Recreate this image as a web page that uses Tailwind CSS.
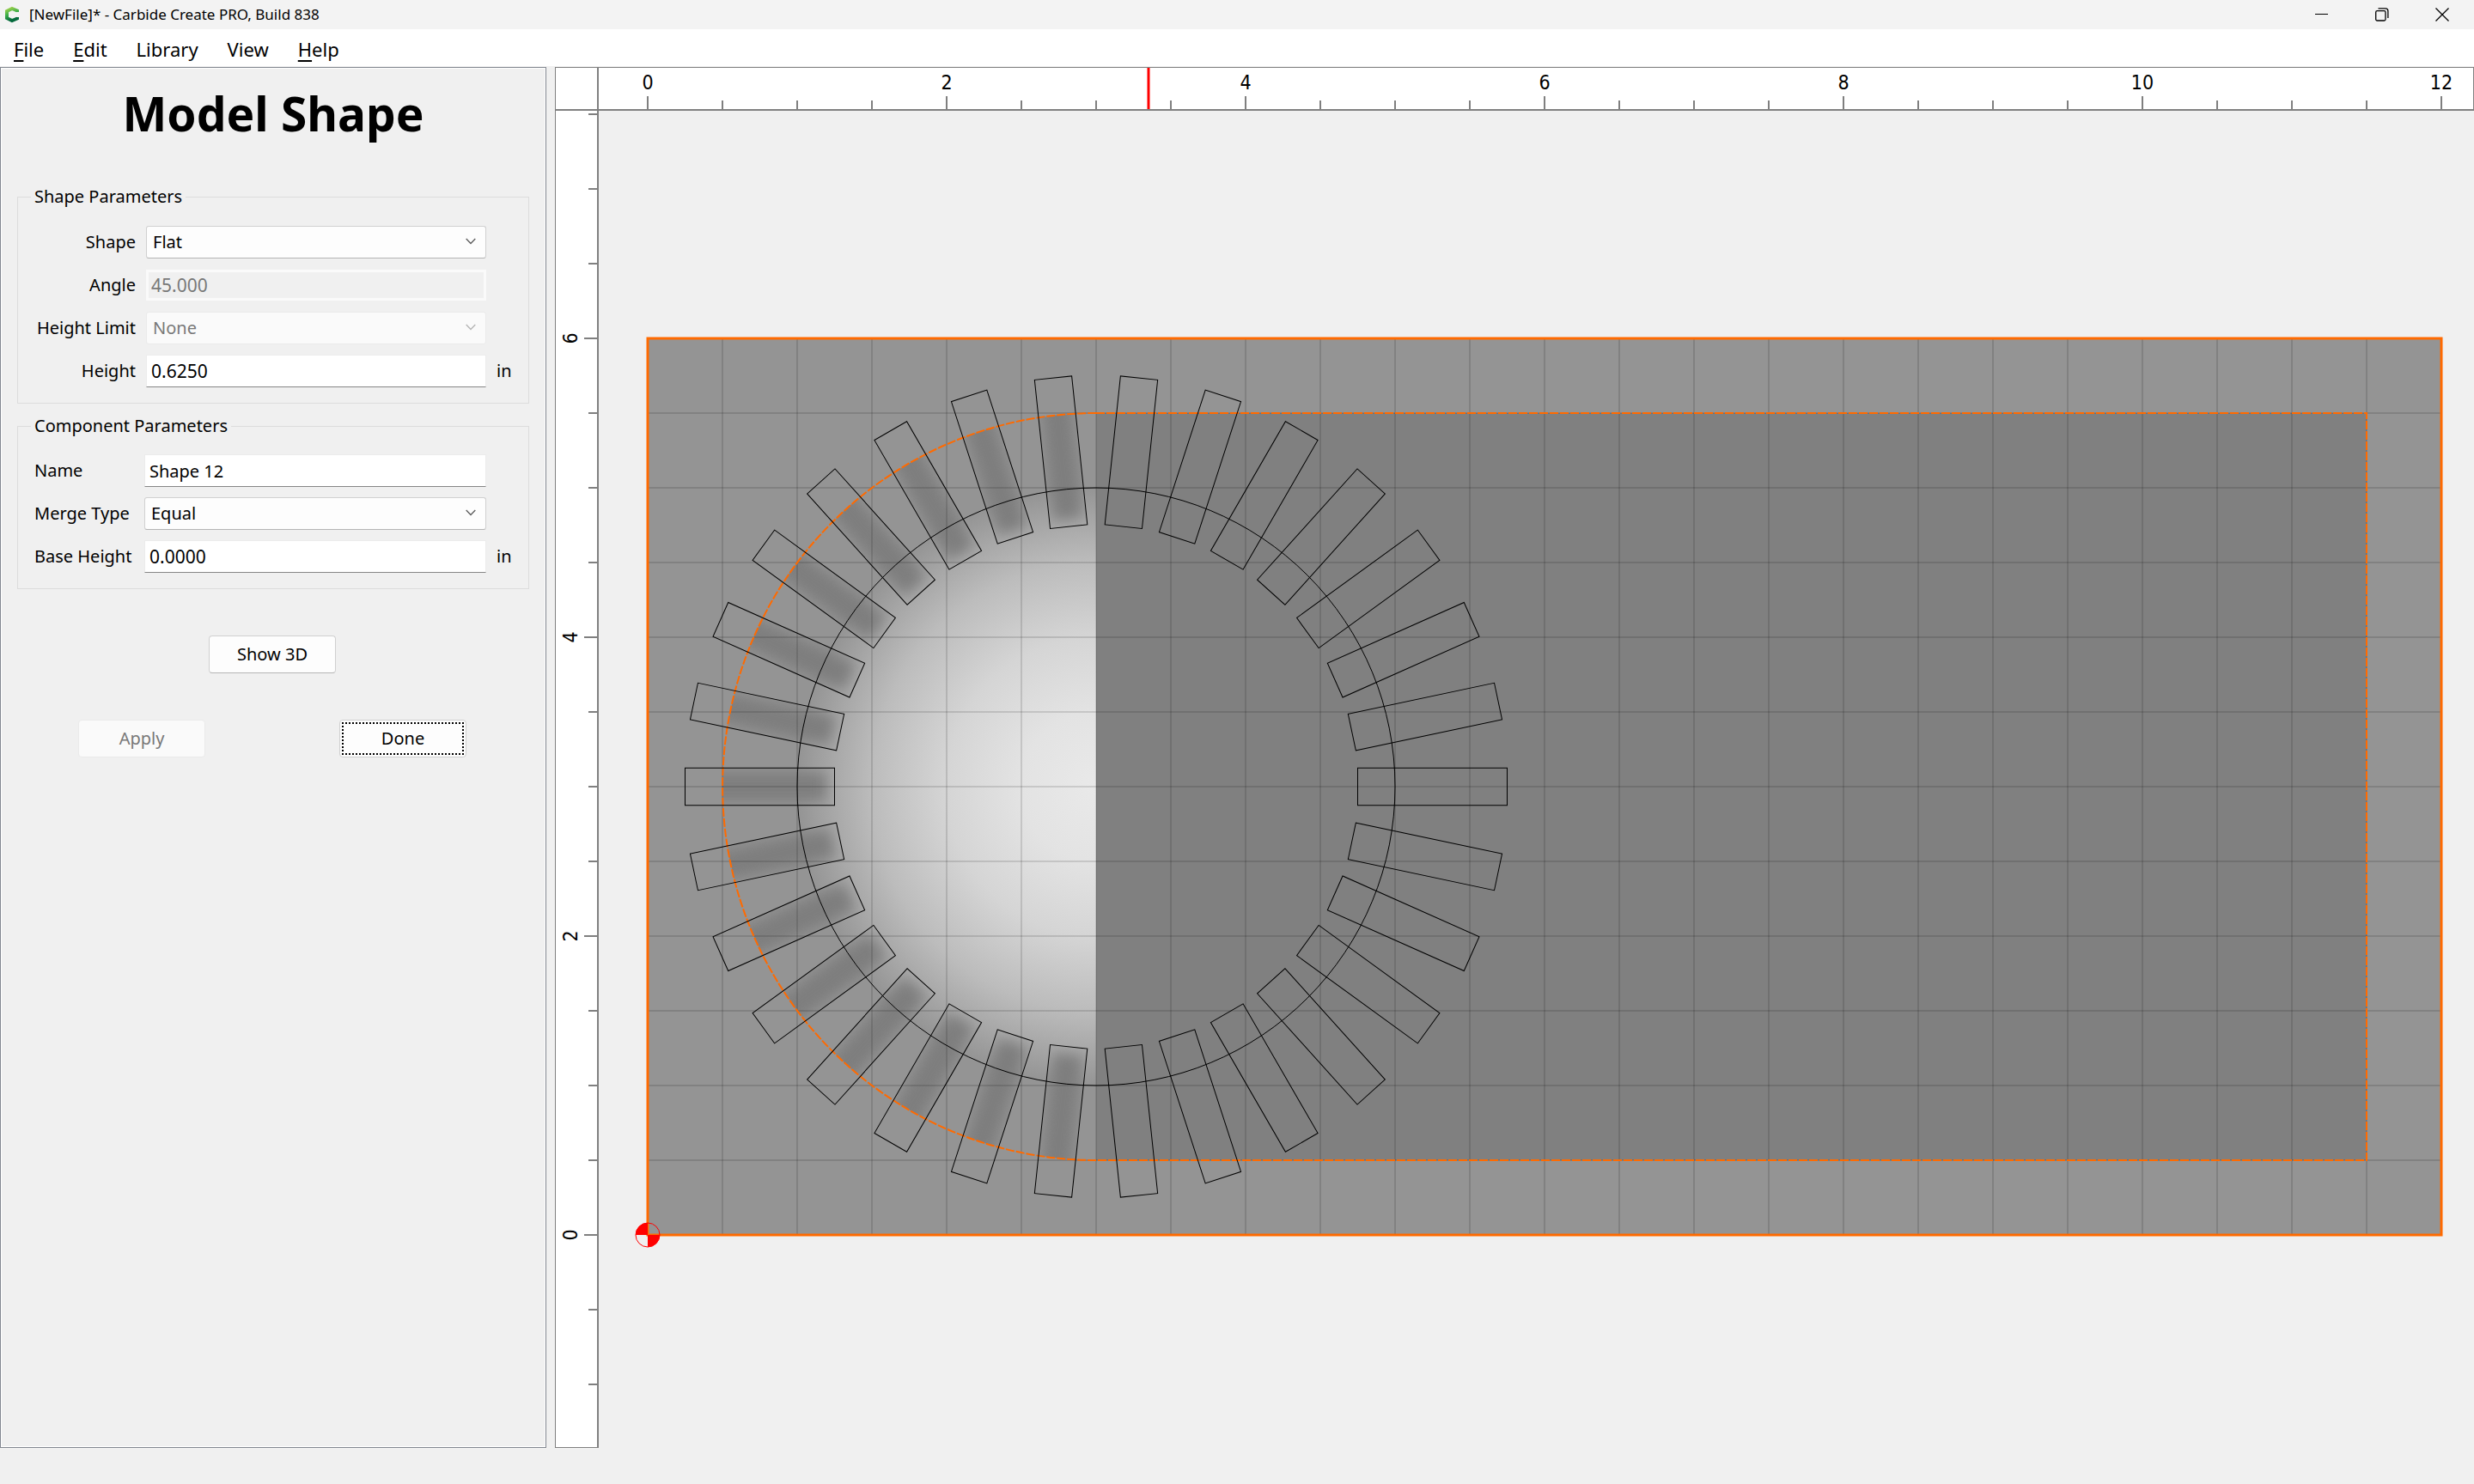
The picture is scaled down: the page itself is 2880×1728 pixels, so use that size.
<!DOCTYPE html>
<html lang="en">

<head>
  <meta charset="UTF-8">
  <meta name="viewport" content="width=device-width, initial-scale=1.0">
  <title>[NewFile]* - Carbide Create PRO, Build 838</title>
  <script src="https://cdn.jsdelivr.net/npm/@tailwindcss/browser@4"></script>
</head>

<body class="h-screen flex flex-col overflow-hidden bg-[#f0f0f0] text-black text-[20px] leading-7 font-['Noto_Sans','Open_Sans',sans-serif]">
  <!-- title bar -->
  <header class="h-[34px] shrink-0 flex items-center bg-[#f3f3f3] pl-1 pr-[2px]">
    <svg class="w-5 h-5" viewBox="0 0 20 20" fill="none">
      <defs>
        <linearGradient id="logo" x1="0" y1="0" x2="0.3" y2="1">
          <stop offset="0" stop-color="#9bd04a" />
          <stop offset="0.5" stop-color="#3dae49" />
          <stop offset="1" stop-color="#04693c" />
        </linearGradient>
      </defs>
      <path d="M16 7 V5.5 L10 3 L4 6 V14 L10 17 L16 14.5 V13" stroke="url(#logo)" stroke-width="4" />
    </svg>
    <h1 class="ml-[10px] text-[17px] font-normal">[NewFile]* - Carbide Create PRO, Build 838</h1>
    <div class="ml-auto flex h-full">
      <button class="w-[70px] h-full flex items-center justify-center" aria-label="Minimize">
        <svg class="w-4 h-4" viewBox="0 0 16 16" stroke="#000"><path d="M0 7.5 H15" /></svg>
      </button>
      <button class="w-[70px] h-full flex items-center justify-center" aria-label="Restore">
        <svg class="w-4 h-4" viewBox="0 0 16 16" fill="none" stroke="#000" stroke-width="1.3">
          <rect x="0.7" y="3.7" width="11.3" height="11.3" rx="1.5" />
          <path d="M3.5 0.9 H12 Q14.9 0.9 14.9 4 V12" />
        </svg>
      </button>
      <button class="w-[70px] h-full flex items-center justify-center" aria-label="Close">
        <svg class="w-4 h-4" viewBox="0 0 16 16" stroke="#000" stroke-width="1.3"><path d="M0.5 0.5 L15.5 15.5 M15.5 0.5 L0.5 15.5" /></svg>
      </button>
    </div>
  </header>

  <nav class="h-[43px] shrink-0 flex items-center gap-[34px] bg-white pl-4 pt-[2px] text-[22px]">
    <button><span class="underline underline-offset-4">F</span>ile</button>
    <button><span class="underline underline-offset-4">E</span>dit</button>
    <button>Library</button>
    <button>View</button>
    <button><span class="underline underline-offset-4">H</span>elp</button>
  </nav>

  <main class="flex-1 min-h-0 flex gap-[10px] pt-px">
    <!-- parameters panel -->
    <section class="w-[636px] shrink-0 border border-[#828790]">
      <form class="h-full border border-white px-[18px]">
        <h2 class="mt-[22px] mb-[53px] text-center text-[55px] leading-[60px] font-bold">Model Shape</h2>

        <fieldset class="border border-[#dcdcdc] pl-[19px] pt-5 pb-[18px] flex flex-col gap-3">
          <legend class="-ml-1 px-1">Shape Parameters</legend>
          <div class="h-[38px] flex items-center gap-3">
            <label for="shape" class="w-[118px] text-right">Shape</label>
            <div class="relative w-[396px] h-full">
              <select id="shape" class="appearance-none w-full h-full rounded-[3px] border border-[#d0d0d0] border-b-[#b4b4b4] bg-[#fdfdfd] px-[7px]">
                <option>Flat</option>
              </select>
              <svg class="absolute right-3 top-[14px] w-3 h-2 pointer-events-none" viewBox="0 0 12 8" fill="none" stroke="#5c5c5c" stroke-width="1.3"><path d="M0.7 1 L6 6.5 L11.3 1" /></svg>
            </div>
          </div>
          <div class="h-[38px] flex items-center gap-3">
            <label for="angle" class="w-[118px] text-right">Angle</label>
            <input id="angle" disabled value="45.000" class="w-[396px] h-[36px] border-3 border-[#fafafa] bg-[#f0f0f0] px-[3px] text-[21px] text-[#787878]">
          </div>
          <div class="h-[38px] flex items-center gap-3">
            <label for="limit" class="w-[118px] text-right whitespace-nowrap">Height Limit</label>
            <div class="relative w-[396px] h-full">
              <select id="limit" disabled class="appearance-none w-full h-full rounded-[3px] border border-[#eaeaea] bg-[#fafafa] px-[7px] text-[#787878] opacity-100">
                <option>None</option>
              </select>
              <svg class="absolute right-3 top-[14px] w-3 h-2 pointer-events-none" viewBox="0 0 12 8" fill="none" stroke="#b4b4b4" stroke-width="1.3"><path d="M0.7 1 L6 6.5 L11.3 1" /></svg>
            </div>
          </div>
          <div class="h-[38px] flex items-center gap-3">
            <label for="height" class="w-[118px] text-right">Height</label>
            <input id="height" value="0.6250" class="w-[396px] h-[38px] border border-[#ececec] border-b-[#868686] bg-white px-[5px] text-[21px]">
            <span>in</span>
          </div>
        </fieldset>

        <fieldset class="mt-3 border border-[#dcdcdc] pl-[19px] pt-[19px] pb-[18px] flex flex-col gap-3">
          <legend class="-ml-1 px-1">Component Parameters</legend>
          <div class="h-[38px] flex items-center gap-3">
            <label for="name" class="w-[116px]">Name</label>
            <input id="name" value="Shape 12" class="w-[398px] h-[38px] border border-[#ececec] border-b-[#868686] bg-white px-[5px]">
          </div>
          <div class="h-[38px] flex items-center gap-3">
            <label for="merge" class="w-[116px]">Merge Type</label>
            <div class="relative w-[398px] h-full">
              <select id="merge" class="appearance-none w-full h-full rounded-[3px] border border-[#d0d0d0] border-b-[#b4b4b4] bg-[#fdfdfd] px-[7px]">
                <option>Equal</option>
              </select>
              <svg class="absolute right-3 top-[14px] w-3 h-2 pointer-events-none" viewBox="0 0 12 8" fill="none" stroke="#5c5c5c" stroke-width="1.3"><path d="M0.7 1 L6 6.5 L11.3 1" /></svg>
            </div>
          </div>
          <div class="h-[38px] flex items-center gap-3">
            <label for="base" class="w-[116px] whitespace-nowrap">Base Height</label>
            <input id="base" value="0.0000" class="w-[398px] h-[38px] border border-[#ececec] border-b-[#868686] bg-white px-[5px] text-[21px]">
            <span>in</span>
          </div>
        </fieldset>

        <div class="mt-[54px] flex justify-center pr-[2px]">
          <button type="button" class="w-[148px] h-[44px] rounded-[4px] border border-[#d0d0d0] border-b-[#b4b4b4] bg-[#fdfdfd]">Show 3D</button>
        </div>
        <div class="mt-[54px] flex justify-between pl-[71px] pr-[73px]">
          <button type="button" disabled class="w-[148px] h-[44px] rounded-[4px] border border-[#eaeaea] bg-[#fafafa] text-[#787878]">Apply</button>
          <button type="button" class="w-[148px] h-[44px] rounded-[4px] border border-[#d0d0d0] bg-[#fdfdfd] p-[2px]">
            <span class="flex w-full h-full items-center justify-center border-2 border-dotted border-black">Done</span>
          </button>
        </div>
      </form>
    </section>

    <!-- drawing view: rulers along the top and left, canvas in the remaining cell -->
    <section class="flex-1 min-w-0 grid grid-cols-[51px_1fr] grid-rows-[51px_1fr] font-['DejaVu_Sans_Condensed','Noto_Sans',sans-serif]">
      <div class="border-t border-l border-r-2 border-b-2 border-[#808080] bg-white"></div>
      <div class="min-w-0 border-t border-r border-b-2 border-[#808080] bg-white">
        <svg id="rulerX" class="block w-full h-12"></svg>
      </div>
      <div class="min-h-0 border-l border-r-2 border-b border-[#808080] bg-white">
        <svg id="rulerY" class="block w-12 h-full"></svg>
      </div>
      <div class="min-w-0 min-h-0">
        <svg id="canvas" class="block w-full h-full" fill="none"></svg>
      </div>
    </section>
  </main>

  <footer class="h-[42px] shrink-0"></footer>

  <script>
    // pixels per inch, and where the stock origin sits in the canvas
    const PPI = 174
    const ORIGIN = { x: 57, y: 1309 }
    const X = inch => ORIGIN.x + inch * PPI
    const Y = inch => ORIGIN.y - inch * PPI

    const range = (from, to, step) => {
      const arr = []
      for (let v = from; v <= to; v += step) arr.push(v)
      return arr
    }

    // rulers
    document.getElementById('rulerX').innerHTML = range(0, 12, 0.5).map(v => {
      const major = v % 2 == 0
      return `<line x1="${X(v)}" x2="${X(v)}" y1="${major ? 33 : 38}" y2="48" stroke="#000" />
        ${major ? `<text x="${X(v)}" y="25" text-anchor="middle" class="text-[23px]">${v}</text>` : ''}`
    }).join('') + `<line x1="640" x2="640" y1="0" y2="48" stroke="#f00" stroke-width="3" />`

    document.getElementById('rulerY').innerHTML = range(-1, 7.5, 0.5).map(v => {
      const major = v % 2 == 0
      return `<line y1="${Y(v)}" y2="${Y(v)}" x1="${major ? 33 : 38}" x2="48" stroke="#000" />
        ${major ? `<text transform="translate(25 ${Y(v)}) rotate(-90)" text-anchor="middle" class="text-[23px]">${v}</text>` : ''}`
    }).join('')

    // canvas
    const cx = X(3), cy = Y(3)
    const angles = range(0, 348, 12)
    const outline = `M${cx} ${Y(5.5)} H${X(11.5)} V${Y(0.5)} H${cx} A${2.5 * PPI} ${2.5 * PPI} 0 0 1 ${cx} ${Y(5.5)} Z`
    const grid = range(0.5, 11.5, 0.5).map(v => `M${X(v)} ${Y(6)} V${Y(0)}`).join(' ') + ' ' +
      range(0.5, 5.5, 0.5).map(v => `M${X(0)} ${Y(v)} H${X(12)}`).join(' ')
    const shades = angles.filter(a => a > 90 && a < 270).map(a =>
      `<rect x="${cx + 314}" y="${cy - 17}" width="180" height="34" transform="rotate(${a} ${cx} ${cy})" />`).join('')
    const spokes = angles.map(a =>
      `<rect x="${cx + 1.75 * PPI}" y="${cy - PPI / 8}" width="${PPI}" height="${PPI / 4}" transform="rotate(${a} ${cx} ${cy})" />`).join('')

    document.getElementById('canvas').innerHTML = `
      <defs>
        <radialGradient id="dome" gradientUnits="userSpaceOnUse" cx="${cx}" cy="${cy}" r="${2 * PPI}">
          <stop offset="0" stop-color="#e9e9e9" />
          <stop offset="0.25" stop-color="#e3e3e3" />
          <stop offset="0.5" stop-color="#d5d5d5" />
          <stop offset="0.75" stop-color="#bcbcbc" />
          <stop offset="0.88" stop-color="#a8a8a8" />
          <stop offset="1" stop-color="#949494" />
        </radialGradient>
        <filter id="soft" x="-10%" y="-10%" width="120%" height="120%"><feGaussianBlur stdDeviation="8" /></filter>
        <clipPath id="half"><path d="M${cx} ${Y(0.5)} A${2.5 * PPI} ${2.5 * PPI} 0 0 1 ${cx} ${Y(5.5)} Z" /></clipPath>
        <clipPath id="slots">${spokes}</clipPath>
      </defs>
      <rect x="${X(0)}" y="${Y(6)}" width="${12 * PPI}" height="${6 * PPI}" fill="#949494" />
      <path d="M${cx} ${Y(1)} A${2 * PPI} ${2 * PPI} 0 0 1 ${cx} ${Y(5)} Z" fill="url(#dome)" />
      <g clip-path="url(#half)"><g clip-path="url(#slots)"><g filter="url(#soft)" fill="#7e7e7e">${shades}</g></g></g>
      <rect x="${cx}" y="${Y(5.5)}" width="${8.5 * PPI}" height="${5 * PPI}" fill="#808080" />
      <path d="${grid}" stroke="#000" stroke-opacity="0.25" />
      <rect x="${X(0)}" y="${Y(6)}" width="${12 * PPI}" height="${6 * PPI}" stroke="#ff6a00" stroke-width="3" />
      <path d="${outline}" stroke="#ff6a00" stroke-width="2" stroke-dasharray="10 2" />
      <circle cx="${cx}" cy="${cy}" r="${2 * PPI}" stroke="#000" />
      <g stroke="#000">${spokes}</g>
      <g transform="translate(${X(0)} ${Y(0)})">
        <path d="M0 0 V-14 A14 14 0 0 0 -14 0 Z M0 0 V14 A14 14 0 0 0 14 0 Z" fill="#f00" />
        <circle r="14" stroke="#f00" />
      </g>`
  </script>
</body>

</html>
